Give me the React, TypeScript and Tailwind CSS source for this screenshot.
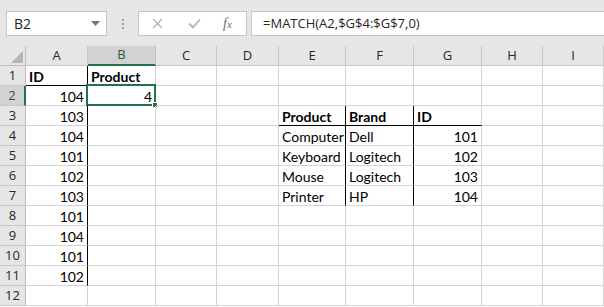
import React from "react";

const COLS = [
  { key: "A", w: 62 },
  { key: "B", w: 68 },
  { key: "C", w: 61 },
  { key: "D", w: 62 },
  { key: "E", w: 67 },
  { key: "F", w: 68 },
  { key: "G", w: 68 },
  { key: "H", w: 61 },
  { key: "I", w: 61 },
];

type Cell = { v: string; bold?: boolean; right?: boolean };

const cells: Record<string, Cell> = {
  A1: { v: "ID", bold: true },
  B1: { v: "Product", bold: true },
  B2: { v: "4", right: true },
  E3: { v: "Product", bold: true },
  F3: { v: "Brand", bold: true },
  G3: { v: "ID", bold: true },
  E4: { v: "Computer" },
  F4: { v: "Dell" },
  G4: { v: "101", right: true },
  E5: { v: "Keyboard" },
  F5: { v: "Logitech" },
  G5: { v: "102", right: true },
  E6: { v: "Mouse" },
  F6: { v: "Logitech" },
  G6: { v: "103", right: true },
  E7: { v: "Printer" },
  F7: { v: "HP" },
  G7: { v: "104", right: true },
};

const ids = ["104", "103", "104", "101", "102", "103", "101", "104", "101", "102"];
ids.forEach((id, i) => {
  cells[`A${i + 2}`] = { v: id, right: true };
});

// thick (black) borders drawn in the sheet
function blackRight(col: string, row: number) {
  if (col === "A" && row >= 1 && row <= 11) return true;
  if ((col === "E" || col === "F") && row >= 3 && row <= 7) return true;
  return false;
}

function blackBottom(col: string, row: number) {
  if (col === "A" && row === 1) return true;
  if (["E", "F", "G"].includes(col) && row === 3) return true;
  return false;
}

const rows = Array.from({ length: 12 }, (_, i) => i + 1);

function FormulaBar() {
  return (
    <div className="flex h-[46px] shrink-0 items-start bg-[#e6e6e6] pt-[11px] pl-[6px]">
      <div className="flex h-[25px] w-[101px] items-center justify-between border border-[#c6c6c6] bg-white pl-[7px] pr-[6px]">
        <span className="text-[14px] text-[#262626]">B2</span>
        <svg width="9" height="5" viewBox="0 0 9 5">
          <path d="M0 0h9L4.5 5z" fill="#777" />
        </svg>
      </div>
      <div className="flex h-[25px] w-[31px] flex-col items-center justify-center gap-[2px]">
        <span className="h-[2px] w-[2px] bg-[#a0a0a0]" />
        <span className="h-[2px] w-[2px] bg-[#a0a0a0]" />
        <span className="h-[2px] w-[2px] bg-[#a0a0a0]" />
      </div>
      <div className="flex h-[25px] w-[109px] items-center border border-[#c6c6c6] bg-white">
        <svg className="ml-[13px]" width="11" height="11" viewBox="0 0 11 11">
          <path d="M1 1l9 9M10 1l-9 9" stroke="#b4b4b4" strokeWidth="1.4" />
        </svg>
        <svg className="ml-[25px]" width="13" height="11" viewBox="0 0 13 11">
          <path d="M1 5.5l4 4 7-8" stroke="#b4b4b4" strokeWidth="1.8" fill="none" />
        </svg>
        <span
          className="ml-[22px] text-[14px] italic text-[#6e6e6e]"
          style={{ fontFamily: "'Liberation Serif', serif" }}
        >
          f<span className="text-[11px]">x</span>
        </span>
      </div>
      <div className="ml-[4px] flex h-[25px] flex-1 items-center border border-r-0 border-[#c6c6c6] bg-white pl-[11px]">
        <span className="text-[13px] text-[#262626]">=MATCH(A2,$G$4:$G$7,0)</span>
      </div>
    </div>
  );
}

export default function App() {
  const gridCols = `26px ${COLS.map((c) => `${c.w}px`).join(" ")}`;

  return (
    <div
      className="flex h-[307px] w-[604px] flex-col overflow-hidden bg-white"
      style={{ fontFamily: "'Open Sans', sans-serif" }}
    >
      <FormulaBar />

      <div className="grid" style={{ gridTemplateColumns: gridCols, gridAutoRows: "20px" }}>
        {/* select-all corner */}
        <div className="relative border-r border-b border-[#bdbdbd] bg-[#e6e6e6]">
          <svg className="absolute right-[2px] bottom-[2px]" width="12" height="12" viewBox="0 0 12 12">
            <path d="M12 0v12H0z" fill="#b4b4b4" />
          </svg>
        </div>

        {/* column headers */}
        {COLS.map((c) => (
          <div
            key={c.key}
            className={
              c.key === "B"
                ? "flex items-center justify-center border-r border-b-2 border-r-[#bdbdbd] border-b-[#217346] bg-[#d2d2d2] text-[13px] text-[#1f5c3a]"
                : "flex items-center justify-center border-r border-b border-[#c8c8c8] bg-[#e6e6e6] text-[13px] text-[#262626]"
            }
          >
            {c.key}
          </div>
        ))}

        {rows.map((r) => (
          <React.Fragment key={r}>
            <div
              className={
                r === 2
                  ? "flex items-center justify-center border-r-2 border-b border-r-[#217346] border-b-[#c8c8c8] bg-[#d2d2d2] text-[13px] text-[#1f5c3a]"
                  : "flex items-center justify-center border-r border-b border-r-[#bdbdbd] border-b-[#c8c8c8] bg-[#e6e6e6] text-[13px] text-[#262626]"
              }
            >
              {r}
            </div>
            {COLS.map((c) => {
              const cell = cells[`${c.key}${r}`];
              const selected = c.key === "B" && r === 2;
              return (
                <div
                  key={c.key}
                  className={[
                    "relative flex items-end overflow-visible whitespace-nowrap border-r border-b px-[3px] pb-[1px] text-[14px] leading-[14px] text-black",
                    blackRight(c.key, r) ? "border-r-black" : "border-r-[#d4d4d4]",
                    blackBottom(c.key, r) ? "border-b-black" : "border-b-[#d4d4d4]",
                    cell?.right ? "justify-end" : "justify-start",
                    cell?.bold ? "font-bold" : "",
                  ].join(" ")}
                  style={{ fontFamily: "Lato, 'Liberation Sans', sans-serif" }}
                >
                  {cell?.v}
                  {selected && (
                    <div className="pointer-events-none absolute -top-[2px] -left-[2px] h-[22px] w-[70px] border-2 border-[#217346]">
                      <div className="absolute -right-[4px] -bottom-[4px] h-[6px] w-[6px] border border-white bg-[#217346]" />
                    </div>
                  )}
                </div>
              );
            })}
          </React.Fragment>
        ))}
      </div>
    </div>
  );
}
